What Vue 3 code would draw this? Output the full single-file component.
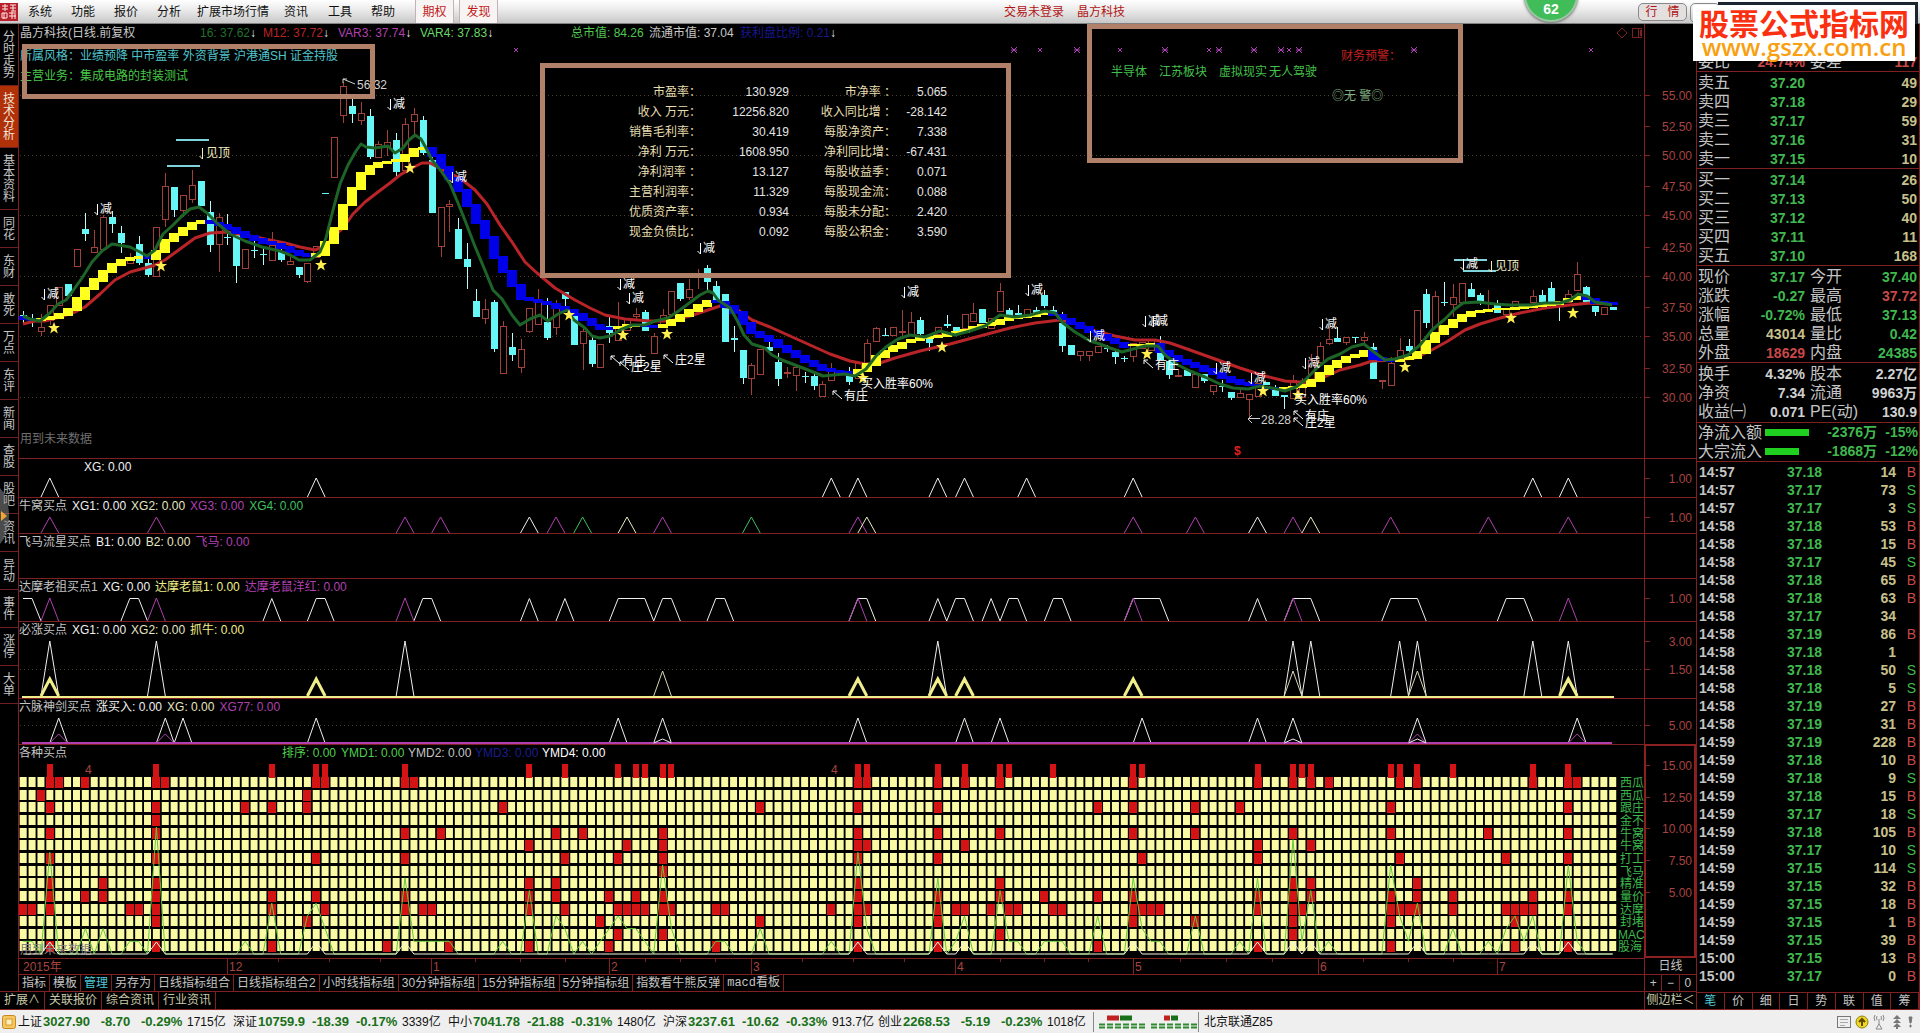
<script setup>
const X0 = 23.2
const STEP = 8.88
const r1 = (n) => Math.round(n * 10) / 10
const cx = (i) => r1(X0 + STEP * i)

const menus = [
  ['系统', 43], ['功能', 43], ['报价', 43], ['分析', 40], ['扩展市场行情', 87],
  ['资讯', 44], ['工具', 43], ['帮助', 44],
]
const sideTabs = ['分时走势', '技术分析', '基本资料', '同花', '东财', '敢死', '万点', '东评', '新闻', '查股', '股吧', '资讯', '异动', '事件', '涨停', '大单']

const candleText = `c945,955,933,968 c955,965,943,980 r982,992,942,1008 r916,960,916,975 r860,915 c853,888,853,898 r747,797
c688,703,640,722 r742,757,690,760 r652,748,645,748 c650,672,633,700 c698,730,678,760 r770,790,760,790 c732,788,708,795 c788,825,765,830
r680,827 r558,658,520,680 c562,630,560,650 r586,630,586,650 r556,596,510,610 c544,618 c636,735,603,755 r650,732,640,815 c710,714,643,735
c705,797,690,848 r747,803 c750,754,720,775 c762,766,745,795 r735,780,695,780 c755,780,735,787 r783,791,770,791 c802,825,802,835 r788,842,788,848
r738,770 c578,581 r412,532 r258,344,245,368 c318,342,297,368 r340,359,306,374 c348,470,327,478 r432,470,422,470 r426,440,390,468 c420,515,400,533
r373,510,355,510 r342,362,325,405 c360,460,348,465 c480,640,470,640 r622,737,622,770 r613,617,600,695 c688,776,655,776 c777,802,730,866 c903,950,868,950
r928,955,898,972 c905,1046,900,1055 r978,1118,963,1122 c1041,1064,1000,1082 r1048,1102,1018,1118 r925,992,925,1000 r900,973,868,973 c965,1013,895,1020
r918,980,900,1005 c876,896,876,920 c938,1034 r993,1030,978,1110 c1020,1092,1010,1100 r1033,1100 c978,998,950,1028 r978,1020,905,1020 r956,990
r943,948,925,960 c936,993,930,993 r1008,1058,1000,1058 r944,980,928,980 r874,942 c848,897,848,902 r868,890,838,900 r822,826,808,868 c804,846,795,870
c858,900,843,910 c882,1026 c1015,1020,978,1055 c1050,1134,1050,1152 r1096,1135,1088,1185 r1048,1122 c1042,1052,1020,1052 c1086,1137,1058,1158
r1116,1120,1100,1135 r1102,1124,1102,1172 c1127,1130,1115,1150 c1127,1158,1120,1170 r1153,1187,1143,1187 r1108,1140,1088,1140 c1110,1118
c1112,1145,1100,1155 r1090,1135 r1030,1100,1017,1100 r985,1022,980,1022 c1005,1009,985,1009 r980,1005 r993,997,930,1010 r966,1005,937,1005
c960,1002,950,1015 c1018,1030,1018,1052 r980,1002 c973,978,945,985 c982,1000 r943,985 r940,962,908,962 c927,970 r955,985 r874,932,850,932
c930,955,925,955 c940,944,915,955 r928,945 c930,940,922,940 c885,918,870,925 c930,945,917,945 c968,1037,935,1055 c1035,1064 r1053,1066,1053,1082
r1053,1066,1053,1082 r1037,1057 c1044,1047,1035,1055 c1056,1072,1050,1092 c1075,1078,1068,1085 r1030,1068,1030,1085 r1025,1045 r1020,1050 c1040,1080,1008,1080
c1082,1124,1082,1137 r1124,1126,1110,1126 c1110,1127 r1123,1160 c1123,1143,1123,1150 r1154,1172,1154,1185 c1157,1160,1140,1175 c1175,1194,1175,1200
r1178,1190,1165,1190 r1182,1198,1182,1258 r1150,1188 c1145,1155 c1160,1188,1155,1188 c1186,1190,1186,1227 r1140,1195,1125,1195 r1150,1190,1135,1190
r1080,1140,1062,1140 r1038,1085,1025,1085 r1018,1028,980,1035 c1014,1026,982,1026 r1010,1025,1010,1035 c1010,1013,1010,1030 r1010,1020,995,1030
c1040,1137,1030,1137 r1139,1143,1139,1168 r1090,1155,1070,1155 r1050,1070,1015,1070 c1037,1052,1018,1065 r930,1065 c882,968,868,985 r888,998,873,998
c906,909,845,918 r892,912,852,950 r850,905 c867,890,850,890 c885,905,880,915 r928,931,870,931 c915,940,900,940 r925,942 r902,920 r915,925
r888,905,870,905 c885,905,870,905 c863,907,847,907 c910,920,910,963 r883,905,870,905 r823,870,785,870 c862,905,858,905 c918,935,918,948 r920,943 c922,930`
const candles = candleText.trim().split(/\s+/).map((s, i) => {
  const v = s.slice(1).split(',').map((n) => Math.round(n / 3))
  const [top, bottom] = v
  return { up: s[0] === 'r', x: Math.round(cx(i)), top, h: Math.max(bottom - top, 1), high: v[2] ?? top, bottom, low: v[3] ?? bottom }
})

const fastLine = '23,316 30,319 40,321 50,313 58,304 66,300 72,292 82,278 92,262 102,251 112,244 118,245 130,247 140,252 147,256 155,250 163,234 172,226 182,216 190,209 199,207 207,213 218,224 230,234 245,241 262,247 280,251 290,255 299,260 310,260 320,252 326,238 333,210 340,184 348,165 356,151 361,144 366,147 375,148 388,146 395,153 403,148 409,140 415,135 421,139 426,148 432,160 441,171 450,184 458,203 466,223 474,244 484,268 493,290 502,299 512,315 520,325 530,319 540,315 548,321 558,314 567,310 574,320 585,328 592,336 600,338 610,336 620,330 632,325 645,325 655,321 668,318 680,310 692,301 700,295 708,291 713,293 718,300 730,308 737,320 744,335 752,344 765,348 772,355 782,360 795,365 808,370 823,376 833,375 845,374 855,376 866,369 876,356 886,347 898,339 910,335 925,337 940,331 955,335 970,331 985,326 1000,315 1015,317 1030,315 1045,311 1055,313 1063,323 1075,332 1090,341 1100,344 1110,348 1122,352 1133,349 1145,346 1158,346 1165,355 1178,365 1190,371 1205,377 1220,384 1233,388 1248,389 1260,386 1272,388 1285,391 1296,387 1305,380 1318,367 1328,359 1340,354 1352,347 1364,344 1374,352 1385,360 1395,359 1408,355 1420,345 1432,330 1445,319 1455,309 1463,303 1478,302 1495,304 1510,305 1530,305 1545,303 1560,303 1570,300 1578,294 1587,296 1595,302 1612,305'
const slowLine = '23,324 35,321 45,321 60,317 75,312 85,307 100,294 115,280 130,272 145,268 155,265 165,260 180,249 195,238 210,233 228,232 245,235 265,239 285,243 300,247 315,250 325,246 335,235 343,228 353,214 365,202 378,192 390,183 400,175 412,168 422,163 430,163 443,170 460,178 475,190 487,204 500,225 512,242 525,262 537,273 555,288 575,300 590,308 605,315 625,319 650,321 670,321 690,316 705,311 720,306 735,308 752,320 770,327 790,336 810,345 830,354 850,361 865,364 880,363 895,358 920,351 950,344 980,336 1010,328 1035,323 1060,320 1075,323 1095,331 1115,336 1135,340 1155,340 1170,343 1190,350 1215,359 1240,368 1265,376 1285,381 1300,382 1320,379 1340,370 1360,365 1372,361 1395,360 1415,358 1430,351 1448,341 1465,330 1480,324 1500,318 1520,313 1545,308 1570,305 1590,303 1612,304'
const midPoints = '18,317 35,320 42,320 50,318 58,316 67,313 72,309 80,299 90,288 100,278 110,268 120,261 132,258 142,256 147,260 152,258 162,250 170,240 180,233 190,226 200,221 207,221 215,223 230,227 245,234 262,240 280,245 295,251 311,256 320,255 329,243 339,227 348,203 357,187 365,173 374,166 383,163 401,160 410,155 418,149 427,148 436,155 445,167 454,178 463,190 472,205 481,222 490,238 498,257 507,271 516,285 525,298 540,301 556,305 568,309 578,314 588,320 600,327 610,329 620,328 636,324 650,326 662,327 668,324 680,318 690,312 700,306 711,301 716,299 722,303 735,308 744,320 755,332 770,338 785,348 800,356 815,364 830,370 845,372 855,373 862,370 872,363 880,356 890,350 905,343 920,339 940,336 960,332 975,328 995,323 1010,318 1030,316 1050,313 1057,315 1070,320 1085,327 1100,334 1115,341 1130,346 1140,345 1155,344 1165,352 1180,359 1200,366 1220,374 1240,382 1265,388 1280,389 1288,388 1300,387 1308,385 1320,377 1330,368 1340,362 1350,357 1360,355 1368,351 1380,360 1395,361 1402,360 1415,357 1422,352 1430,342 1440,333 1450,325 1460,318 1470,313 1480,311 1490,310 1510,309 1535,306 1555,304 1570,300 1582,297 1590,299 1600,302 1620,304'.split(' ').map((p) => p.split(',').map(Number))
function mid(x) {
  for (let i = 1; i < midPoints.length; i++) {
    const [bx, by] = midPoints[i]
    if (x <= bx) {
      const [ax, ay] = midPoints[i - 1]
      return ay + ((by - ay) * (x - ax)) / (bx - ax)
    }
  }
  return midPoints[midPoints.length - 1][1]
}
const blocks = candles.map((c, i) => {
  const a = mid(cx(i) - 4.4)
  const b = mid(cx(i) + 4.4)
  const falling = b > a + 0.3
  const thick = Math.abs(b - a) > 2.5 ? 2 : 1
  return { x: Math.round(cx(i) - 5), y: Math.round(Math.min(a, b)) - 1, h: Math.round(Math.abs(b - a)) + thick + 1, color: falling ? '#0000e8' : '#ffff20' }
})

const mainGrid = [95, 155, 215, 276, 336, 397]
const mainAxis = [['55.00', 95], ['52.50', 126], ['50.00', 155], ['47.50', 186], ['45.00', 215], ['42.50', 247], ['40.00', 276], ['37.50', 307], ['35.00', 336], ['32.50', 368], ['30.00', 397]]
const drops = [[389, 104], [96, 209], [451, 177], [43, 294], [699, 248], [619, 284], [628, 298], [903, 292], [1027, 290], [1089, 336], [1144, 321], [1152, 321], [1215, 368], [1250, 378], [1304, 363], [1321, 324], [1462, 264]]
const tops = [[201, 153], [1490, 266]]
const segments = [[176, 209, 140], [167, 200, 166], [1454, 1487, 260], [1463, 1496, 271]]
const pointers = [['有庄', 611, 356], ['庄2星', 620, 362], ['庄2星', 664, 355], ['有庄', 833, 391], ['有庄', 1144, 360], ['有庄', 1294, 411], ['庄2星', 1294, 418]]
const winRates = [[861, 384], [1295, 400]]
const stars = [[410, 168], [54, 328], [161, 266], [321, 265], [569, 315], [623, 335], [667, 334], [863, 378], [942, 347], [1147, 354], [1263, 391], [1298, 395], [1405, 367], [1511, 318], [1573, 313]]
const starPath = 'M0-6 1.6-2H6L2.4.8 3.8 5.5 0 2.7-3.8 5.5-2.4.8-6-2H-1.6Z'
const crosses = [[516, 0], [1014, 1], [1040, 0], [1077, 1], [1120, 0], [1165, 1], [1209, 0], [1219, 1], [1254, 1], [1281, 1], [1289, 0], [1299, 1], [1414, 1], [1591, 0]]

const facts = [
  ['市盈率：', '130.929', '市净率 ：', '5.065'],
  ['收入 万元：', '12256.820', '收入同比增 ：', '-28.142'],
  ['销售毛利率：', '30.419', '每股净资产：', '7.338'],
  ['净利 万元：', '1608.950', '净利同比增：', '-67.431'],
  ['净利润率 ：', '13.127', '每股收益季：', '0.071'],
  ['主营利润率：', '11.329', '每股现金流：', '0.088'],
  ['优质资产率：', '0.934', '每股未分配：', '2.420'],
  ['现金负债比：', '0.092', '每股公积金：', '3.590'],
]

const W = '#f0f0f0', Y = '#f0ee8a', M = '#b040b0', G = '#3fc060', T = '#c4c4c4'
const peak = (i, j, top, base) => `M${cx(i - 1)} ${base}L${cx(i)} ${top}H${cx(j)}L${cx(j + 1)} ${base}`
const many = (list, top, base) => list.map((v) => (Array.isArray(v) ? peak(v[0], v[1], top, base) : peak(v, v, top, base))).join('')
const panels = [
  {
    y: 458, h: 39, indent: true, legend: [['XG: 0.00', W]], axis: [['1.00', 478]], grid: [],
    shapes: [[W, 1, many([3, 33, 91, 94, 103, 106, 113, 125, 170, 174], 478, 497)]],
  },
  {
    y: 497, h: 36, legend: [['牛窝买点', T], ['XG1: 0.00', W], ['XG2: 0.00', '#e6e6c0'], ['XG3: 0.00', M], ['XG4: 0.00', G]], axis: [['1.00', 517]], grid: [],
    shapes: [
      [M, 1, many([3, 15, 43, 47, 60, 72, 94, 125, 132, 143, 154, 165, 174], 517, 533)],
      [W, 1, many([57, 139], 517, 533)], ['#ececc0', 1, many([68, 95, 145], 517, 533)], [G, 1, many([63, 82], 517, 533)],
    ],
  },
  { y: 533, h: 45, legend: [['飞马流星买点', T], ['B1: 0.00', W], ['B2: 0.00', '#e6e6c0'], ['飞马: 0.00', M]], axis: [], grid: [], shapes: [] },
  {
    y: 578, h: 43, legend: [['达摩老祖买点1', T], ['XG: 0.00', W], ['达摩老鼠1: 0.00', Y], ['达摩老鼠洋红: 0.00', M]], axis: [['1.00', 598]], grid: [],
    shapes: [
      [W, 1, `M23 598.500H32L41 621` + many([[12, 13], 28, [33, 34], [45, 46], 57, 61, [67, 70], [72, 73], [78, 79], [94, 95], 103, [105, 106], 109, [111, 112], [116, 117], [125, 128], 139, [143, 145], [154, 157], [167, 169]], 598.5, 621)],
      [M, 1, many([3, 15, 43, 94, 125, 143, 174], 598, 621)],
    ],
  },
  {
    y: 621, h: 77, legend: [['必涨买点', T], ['XG1: 0.00', W], ['XG2: 0.00', '#e6e6c0'], ['抓牛: 0.00', Y]], axis: [['3.00', 641], ['1.50', 669]], grid: [669],
    shapes: [
      [W, 1, many([3, 15, 43, 103, 143, 145, 155, 157, 170, 174], 641, 696)],
      ['#d8d8b0', 1, many([72, 143, 157], 671, 696)],
      [Y, 2, 'M22 697H1614'],
      [Y, 3, many([3, 33, 94, 103, 106, 125, 174], 679, 696)],
    ],
  },
  {
    y: 698, h: 46, legend: [['六脉神剑买点', T], ['涨买入: 0.00', W], ['XG: 0.00', '#e6e6c0'], ['XG77: 0.00', M]], axis: [['5.00', 725]], grid: [725],
    shapes: [
      [W, 1, many([4, 16, 18, 33, 67, 72, 94, 106, 110, 126, 139, 143, 157, 175], 718, 743)],
      [M, 1, 'M22 743.500H1612M22 742.500H1612' + many([4, 16, 157, 175], 734, 743)],
      [W, 1, many([72, 143, 157], 739, 743)],
    ],
  },
]

const rowNames = ['西瓜', '西瓜', '跟庄', '金不', '牛窝', '牛窝', '打工', '飞马', '精准', '量价', '达摩', '封堵', 'MAC', '股海']
const rowY = (r) => Math.round(777 + 12.65 * r)
const hits = [
  [3, 4, 7, 15, 16, 33, 34, 43, 44, 94, 95, 103, 106, 125, 139, 143, 145, 147, 155, 157, 170, 174, 175, 110],
  [2, 32],
  [3, 15, 25, 28, 32, 54, 83, 94, 103, 121, 125, 132, 137, 154, 174],
  [15],
  [3, 15, 43, 47, 60, 63, 72, 94, 103, 110, 125, 132, 143, 154, 165, 174],
  [57, 68, 72, 94, 95, 106, 139, 145],
  [3, 15, 33, 43, 61, 67, 72, 94, 103, 126, 139, 155, 167, 174],
  [72],
  [3, 9, 15, 57, 60, 94, 110, 143, 145, 157],
  [3, 7, 9, 15, 28, 33, 43, 57, 60, 66, 69, 72, 94, 103, 110, 115, 121, 125, 139, 143, 145, 154, 157, 161, 170, 174],
  [0, 1, 3, 12, 13, 15, 28, 34, 43, 45, 46, 57, 61, 67, 68, 69, 70, 72, 73, 78, 79, 91, 94, 95, 103, 105, 106, 109, 111, 112, 116, 117, 125, 126, 127, 128, 139, 143, 144, 154, 155, 156, 157, 161, 167, 168, 169, 170, 174],
  [15, 32, 65, 83, 94, 103, 125, 132, 143, 154, 168],
  [67, 72, 110, 143],
  [3, 15, 28, 41, 48, 57, 66, 78, 94, 103, 121, 139, 154, 168, 174],
]
const redCells = hits.flatMap((list, r) => list.map((i) => ({ x: Math.round(cx(i) - 4), y: rowY(r) })))
const topBars = [3, 15, 28, 33, 34, 43, 57, 61, 67, 69, 70, 72, 73, 94, 95, 103, 106, 110, 111, 116, 125, 126, 139, 143, 144, 145, 154, 155, 157, 161, 170, 174]
const counts = { 0: 1, 1: 1, 3: 8, 7: 2, 9: 2, 12: 1, 13: 1, 15: 10, 25: 1, 28: 4, 32: 3, 33: 4, 34: 2, 43: 6, 44: 1, 45: 1, 46: 1, 47: 1, 48: 1, 54: 1, 57: 5, 60: 3, 61: 2, 63: 1, 65: 1, 66: 2, 67: 3, 68: 2, 69: 2, 70: 1, 72: 7, 73: 2, 78: 1, 79: 1, 83: 2, 91: 1, 94: 8, 95: 2, 103: 6, 105: 1, 106: 3, 110: 5, 111: 1, 112: 1, 115: 1, 116: 1, 117: 1, 121: 3, 125: 6, 126: 2, 127: 1, 128: 1, 132: 3, 137: 1, 139: 6, 143: 9, 144: 1, 145: 5, 147: 1, 154: 7, 155: 3, 156: 1, 157: 4, 161: 2, 165: 1, 167: 2, 168: 3, 169: 1, 170: 3, 174: 7, 175: 1 }
const countLine = candles.map((c, i) => `${cx(i)},${r1(954 - 12.7 * (counts[i] || 0))}`).join(' ')
const picks = [3, 15, 33, 43, 94, 103, 106, 125, 139, 143, 145, 157, 170, 174]
const pickLine = candles.map((c, i) => `${cx(i)},${picks.includes(i) ? 942 : 954}`).join(' ')
const comboLegend = [['各种买点', T], ['排序: 0.00', '#4fd04f'], ['YMD1: 0.00', '#4fd04f'], ['YMD2: 0.00', T], ['YMD3: 0.00', '#1c1c90'], ['YMD4: 0.00', '#ffffff']]
const comboAxis = [['15.00', 765], ['12.50', 797], ['10.00', 828], ['7.50', 860], ['5.00', 892]]
const months = [['12', 227], ['1', 431], ['2', 609], ['3', 751], ['4', 955], ['5', 1133], ['6', 1318], ['7', 1497]]
const minorTicks = [278, 329, 380, 475, 520, 565, 645, 680, 715, 802, 853, 904, 1000, 1044, 1088, 1180, 1226, 1272, 1363, 1408, 1453]

const templates = ['指标', '模板', '管理', '另存为', '日线指标组合', '日线指标组合2', '小时线指标组', '30分钟指标组', '15分钟指标组', '5分钟指标组', '指数看牛熊反弹', 'macd看板']
const links = ['扩展∧', '关联报价', '综合资讯', '行业资讯']

const book = [
  [['卖五', '37.20', 49], ['卖四', '37.18', 29], ['卖三', '37.17', 59], ['卖二', '37.16', 31], ['卖一', '37.15', 10]],
  [['买一', '37.14', 26], ['买二', '37.13', 50], ['买三', '37.12', 40], ['买四', '37.11', 11], ['买五', '37.10', 168]],
]
const stats = [
  [['现价', '37.17', 'g', '今开', '37.40', 'g'], ['涨跌', '-0.27', 'g', '最高', '37.72', 'r'], ['涨幅', '-0.72%', 'g', '最低', '37.13', 'g'], ['总量', '43014', 'y', '量比', '0.42', 'g'], ['外盘', '18629', 'r', '内盘', '24385', 'g']],
  [['换手', '4.32%', 'w', '股本', '2.27亿', 'w'], ['净资', '7.34', 'w', '流通', '9963万', 'w'], ['收益㈠', '0.071', 'w', 'PE(动)', '130.9', 'w']],
]
const flows = [['净流入额', 44, '-2376万', '-15%'], ['大宗流入', 34, '-1868万', '-12%']]
const ticks = `57 18 14 B,57 17 73 S,57 17 3 S,58 18 53 B,58 18 15 B,58 17 45 S,58 18 65 B,58 18 63 B,58 17 34,58 19 86 B,58 18 1,58 18 50 S,58 18 5 S,58 19 27 B,58 19 31 B,59 19 228 B,59 18 10 B,59 18 9 S,59 18 15 B,59 17 18 S,59 18 105 B,59 17 10 S,59 15 114 S,59 15 32 B,59 15 18 B,59 15 1 B,59 15 39 B,00 15 13 B,00 17 0 B`
  .split(',').map((s) => s.split(' ')).map(([m, p, v, f]) => ({ t: (m === '00' ? '15:' : '14:') + m, p: '37.' + p, v, f: f || '' }))
const quoteTabs = ['笔', '价', '细', '日', '势', '联', '值', '筹']
const indices = [
  ['上证', '3027.90', '-8.70', '-0.29%', '1715亿'], ['深证', '10759.9', '-18.39', '-0.17%', '3339亿'], ['中小', '7041.78', '-21.88', '-0.31%', '1480亿'],
  ['沪深', '3237.61', '-10.62', '-0.33%', '913.7亿'], ['创业', '2268.53', '-5.19', '-0.23%', '1018亿'],
]
</script>

<template>
  <div class="app">
    <header class="menubar">
      <svg class="logo" width="18" height="18" viewBox="0 0 18 18">
        <rect width="18" height="18" fill="#b8202c" />
        <path d="M2 3h6M5 1v7M2 6h6M10 2h6M10 5h6M13 2v6M11 8h5M2 10h5v5H2zM4 10v6M9 10h7M9 13h7M12 9v7M15 11v5" stroke="#ffe8e4" fill="none" />
      </svg>
      <nav class="menu">
        <button v-for="m in menus" :key="m[0]" type="button" :style="{ width: m[1] + 'px' }">{{ m[0] }}</button>
      </nav>
      <button class="hot" type="button">期权</button>
      <button class="hot" type="button">发现</button>
      <span class="login">交易未登录</span>
      <span class="stock">晶方科技</span>
      <div class="ball">62</div>
      <button class="mode" type="button">行&nbsp;&nbsp;&nbsp;情</button>
      <span class="mode-next"></span>
      <span class="mode-dark"></span>
      <div class="watermark">
        <strong>股票公式指标网</strong>
        <a href="#">www.gszx.com.cn</a>
      </div>
    </header>

    <div class="body">
      <div class="left">
        <div class="upper">
          <aside class="side">
            <button v-for="(s, i) in sideTabs" :key="s" type="button" :class="{ on: i === 1 }"><span>{{ s }}</span></button>
            <svg class="handle" width="10" height="56" viewBox="0 0 10 56"><path d="M0 0Q9 10 9 28T0 56Z" fill="#888" opacity=".55" /><path d="M1 23l6 5-6 5z" fill="#f0a830" /></svg>
          </aside>

          <main class="charts">
            <section class="panel main-panel">
              <svg class="plot" viewBox="19 24 1625 434" height="434" preserveAspectRatio="xMinYMin meet">
                <line v-for="y in mainGrid" :key="y" x1="20" x2="1644" :y1="y + 0.5" :y2="y + 0.5" class="dots" />
                <g v-for="(c, i) in candles" :key="i">
                  <template v-if="c.up">
                    <path :d="`M${c.x + .5} ${c.high}V${c.top}M${c.x + .5} ${c.bottom}V${c.low}`" stroke="#a04038" />
                    <rect :x="c.x - 2.5" :y="c.top + .5" width="6" :height="c.h" fill="#000" stroke="#a04038" />
                  </template>
                  <template v-else>
                    <path :d="`M${c.x + .5} ${c.high}V${c.low}`" stroke="#b8fbfb" />
                    <rect :x="c.x - 3" :y="c.top" width="7" :height="c.h" fill="#66f6f6" />
                  </template>
                </g>
                <polyline :points="slowLine" class="curve" stroke="#b82428" />
                <rect v-for="(b, i) in blocks" :key="'b' + i" :x="b.x" :y="b.y" width="10" :height="b.h" :fill="b.color" />
                <polyline :points="fastLine" class="curve" stroke="#1d6428" />
                <line v-for="(s, i) in segments" :key="'s' + i" :x1="s[0]" :x2="s[1]" :y1="s[2]" :y2="s[2]" stroke="#7fd4dc" stroke-width="2" />
                <path v-for="(s, i) in stars" :key="'t' + i" :transform="`translate(${s[0]} ${s[1]})`" :d="starPath" fill="#fff050" />
                <path v-for="(c, i) in crosses" :key="'c' + i" :transform="`translate(${c[0]} 50)`" :d="c[1] ? 'M-3-3 3 3M3-3-3 3M-3 0H3' : 'M-2-2 2 2M2-2-2 2'" stroke="#b040b8" />
                <g v-for="(d, i) in drops" :key="'d' + i" :transform="`translate(${d[0]} ${d[1]})`">
                  <path d="M1.500-5V6M1.500 6-1.500 3" stroke="#fff" fill="none" /><text x="4" y="4" fill="#fff">减</text>
                </g>
                <g v-for="(d, i) in tops" :key="'p' + i" :transform="`translate(${d[0]} ${d[1]})`">
                  <path d="M1.500-5V6M1.500 6-1.500 3" stroke="#f0ecc0" fill="none" /><text x="5" y="4" fill="#f0ecc0">见顶</text>
                </g>
                <g v-for="(p, i) in pointers" :key="'q' + i" :transform="`translate(${p[1]} ${p[2]})`">
                  <path d="M0 4V0H4M0 0 9 8" stroke="#fff" fill="none" /><text x="11" y="9" fill="#fff">{{ p[0] }}</text>
                </g>
                <text v-for="(w, i) in winRates" :key="'w' + i" :x="w[0]" :y="w[1] + 4" fill="#fff">买入胜率60%</text>
                <path d="M347 79h-4v4M343 79l12 5M1252 415l-4 4 4 4M1248 418.500h12" stroke="#d0d0d0" fill="none" />
                <text x="357" y="89" fill="#d0d0d0">56.32</text>
                <text x="1261" y="424" fill="#d0d0d0">28.28</text>
                <text x="1234" y="455" fill="#e02020" font-weight="bold">$</text>
                <text x="20" y="443" fill="#707070">用到未来数据</text>
                <path d="M1622 28l5 5-5 5-5-5zM1632.500 28.500h9v9h-9zM1638.500 28v10M1640.500 30v6" stroke="#7c2020" fill="none" />
              </svg>
              <svg class="axis" viewBox="1644 24 52 434" width="52" height="434">
                <path d="M1644.500 24V458" stroke="#802020" />
                <g v-for="a in mainAxis" :key="a[0]"><path :d="`M1645 ${a[1] + .5}h5`" stroke="#802020" /><text x="1692" :y="a[1] + 5" text-anchor="end" class="num">{{ a[0] }}</text></g>
              </svg>
              <div class="overlay">
                <div class="main-legend">
                  <span style="color: #c8c8c8">晶方科技(日线.前复权</span>
                  <span class="fall" style="color: #20702c">16: 37.62</span>
                  <span class="fall" style="color: #bc2424">M12: 37.72</span>
                  <span class="fall" style="color: #b040b0">VAR3: 37.74</span>
                  <span class="fall" style="color: #68d868">VAR4: 37.83</span>
                  <span style="color: #50c850">总市值: 84.26</span>
                  <span style="color: #c8c8c8">流通市值: 37.04</span>
                  <span class="fall" style="color: #18188c">获利盘比例: 0.21</span>
                </div>
                <div class="notes">
                  <p class="style-note"><span>所属风格：</span>业绩预降 中市盈率 外资背景 沪港通SH 证金持股</p>
                  <p class="biz-note"><span>主营业务：</span>集成电路的封装测试</p>
                </div>
                <div class="frame frame-a"></div>
                <div class="frame frame-b">
                  <table class="facts">
                    <tbody>
                      <tr v-for="f in facts" :key="f[0]"><th scope="row">{{ f[0] }}</th><td>{{ f[1] }}</td><th scope="row">{{ f[2] }}</th><td>{{ f[3] }}</td></tr>
                    </tbody>
                  </table>
                </div>
                <div class="frame frame-c">
                  <p class="warn">财务预警：</p>
                  <p class="blocks"><span>半导体</span><span>江苏板块</span><span>虚拟现实</span><span>无人驾驶</span></p>
                  <p class="safe">◎无 警◎</p>
                </div>
              </div>
            </section>

            <section v-for="p in panels" :key="p.y" class="panel">
              <svg class="plot" :viewBox="`19 ${p.y} 1625 ${p.h}`" :height="p.h" preserveAspectRatio="xMinYMin meet">
                <path :d="`M19 ${p.y + .5}H1644`" stroke="#802020" />
                <line v-for="y in p.grid" :key="y" x1="20" x2="1644" :y1="y + 0.5" :y2="y + 0.5" class="dots" />
                <path v-for="(s, i) in p.shapes" :key="i" :d="s[2]" :stroke="s[0]" :stroke-width="s[1]" fill="none" />
              </svg>
              <svg class="axis" :viewBox="`1644 ${p.y} 52 ${p.h}`" width="52" :height="p.h">
                <path :d="`M1644.500 ${p.y}v${p.h}M1644 ${p.y + .5}h52`" stroke="#802020" />
                <g v-for="a in p.axis" :key="a[0]"><path :d="`M1645 ${a[1] + .5}h5`" stroke="#802020" /><text x="1692" :y="a[1] + 5" text-anchor="end" class="num">{{ a[0] }}</text></g>
              </svg>
              <div class="legend" :class="{ indent: p.indent }"><span v-for="l in p.legend" :key="l[0]" :style="{ color: l[1] }">{{ l[0] }}</span></div>
            </section>

            <section class="panel">
              <svg class="plot" viewBox="19 744 1625 214" height="214" preserveAspectRatio="xMinYMin meet">
                <path d="M19 744.500H1644" stroke="#802020" />
                <line v-for="(n, r) in rowNames" :key="r" x1="19.700" x2="1616.400" :y1="rowY(r) + 5" :y2="rowY(r) + 5" stroke="#fafaa4" stroke-width="10" stroke-dasharray="7 1.880" />
                <rect v-for="(c, i) in redCells" :key="i" :x="c.x" :y="c.y" width="8" height="11" fill="#d41414" />
                <rect v-for="b in topBars" :key="'b' + b" :x="Math.round(cx(b) - 3)" y="764" width="6" height="14" fill="#d41414" />
                <text x="20" y="954" fill="#808080">用到未来数据</text>
                <text x="85" y="774" class="num">4</text><text x="831" y="774" class="num">4</text>
                <polyline :points="countLine" fill="none" stroke="#62c83c" />
                <polyline :points="pickLine" fill="none" stroke="#f4f4e0" />
                <text v-for="(n, r) in rowNames" :key="'n' + r" :x="r < 12 ? 1620 : 1618" :y="rowY(r) + 10" fill="#3cb84c">{{ n }}</text>
              </svg>
              <svg class="axis" viewBox="1644 744 52 214" width="52" height="214">
                <rect x="1645" y="745" width="50" height="212" fill="none" stroke="#8c2020" stroke-width="2" />
                <g v-for="a in comboAxis" :key="a[0]"><path :d="`M1645 ${a[1] + .5}h5`" stroke="#802020" /><text x="1692" :y="a[1] + 5" text-anchor="end" class="num">{{ a[0] }}</text></g>
              </svg>
              <div class="legend combo"><span v-for="l in comboLegend" :key="l[0]" :style="{ color: l[1] }">{{ l[0] }}</span></div>
            </section>

            <div class="dates">
              <svg class="plot" viewBox="19 958 1625 16" height="16" preserveAspectRatio="xMinYMin meet">
                <path d="M19 958.500H1644" stroke="#802020" />
                <path v-for="t in minorTicks" :key="t" :d="`M${t}.500 959v3`" stroke="#802020" />
                <text x="23" y="971" class="num">2015年</text>
                <g v-for="m in months" :key="m[0]"><path :d="`M${m[1]}.500 958v16`" stroke="#802020" /><text :x="m[1] + 2" y="971" class="num">{{ m[0] }}</text></g>
              </svg>
              <button class="period" type="button">日线</button>
            </div>
            <div class="templates">
              <button v-for="(t, i) in templates" :key="t" type="button" :class="{ on: i === 2, mono: i === 11 }">{{ t }}</button>
              <div class="zoomers"><button type="button">+</button><button type="button">−</button><button type="button">0</button></div>
            </div>
          </main>
        </div>
        <div class="links">
          <a v-for="l in links" :key="l" href="#">{{ l }}</a>
          <button class="collapse" type="button">侧边栏＜</button>
        </div>
      </div>

      <aside class="quote">
        <table class="grid ratio"><tbody><tr><th scope="row">委比</th><td class="r">24.74%</td><th scope="row">委差</th><td class="r">117</td></tr></tbody></table>
        <table v-for="(b, i) in book" :key="i" class="grid">
          <tbody><tr v-for="r in b" :key="r[0]"><th scope="row">{{ r[0] }}</th><td class="g">{{ r[1] }}</td><td class="y" colspan="2">{{ r[2] }}</td></tr></tbody>
        </table>
        <table v-for="(b, i) in stats" :key="'s' + i" class="grid" :class="{ loose: i === 1 }">
          <tbody><tr v-for="r in b" :key="r[0]"><th scope="row">{{ r[0] }}</th><td :class="r[2]">{{ r[1] }}</td><th scope="row">{{ r[3] }}</th><td :class="r[5]">{{ r[4] }}</td></tr></tbody>
        </table>
        <div class="flows">
          <div v-for="f in flows" :key="f[0]" class="flow"><span>{{ f[0] }}</span><i :style="{ width: f[1] + 'px' }"></i><b>{{ f[2] }}</b><b>{{ f[3] }}</b></div>
        </div>
        <table class="ticks">
          <tbody><tr v-for="(t, i) in ticks" :key="i"><td>{{ t.t }}</td><td class="g">{{ t.p }}</td><td class="y">{{ t.v }}</td><td :class="t.f === 'B' ? 'r' : 'g'">{{ t.f }}</td></tr></tbody>
        </table>
        <nav class="quote-tabs"><button v-for="(q, i) in quoteTabs" :key="q" type="button" :class="{ on: i === 0 }">{{ q }}</button></nav>
      </aside>
    </div>

    <footer class="status">
      <svg width="14" height="14" viewBox="0 0 14 14"><rect x=".5" y=".5" width="13" height="13" rx="2" fill="#f4c860" stroke="#c88820" /><rect x="4" y="4" width="6" height="6" fill="#fff0c0" stroke="#d89a30" /></svg>
      <div v-for="x in indices" :key="x[0]" class="index"><span>{{ x[0] }}</span><b>{{ x[1] }}</b><b class="mid">{{ x[2] }}</b><b>{{ x[3] }}</b><span>{{ x[4] }}</span></div>
      <svg class="breadth" width="104" height="20" viewBox="0 0 104 20">
        <path d="M13 6h12M70 6h6" stroke="#c02020" stroke-width="5" /><path d="M26 6h12M77 6h7" stroke="#187018" stroke-width="5" />
        <path d="M5 12.500h47M57 12.500h47M5 15.500h47M57 15.500h47" stroke="#2e8a2e" stroke-width="2" stroke-dasharray="6 2" />
      </svg>
      <span class="host">北京联通Z85</span>
      <svg class="tray" width="84" height="18" viewBox="0 0 84 18" fill="none">
        <rect x="1.500" y="3.500" width="13" height="11" stroke="#777" /><path d="M4 6.500h8M4 9.500h8M4 12.500h5" stroke="#aaa" />
        <circle cx="26" cy="9" r="6" fill="#f0d820" stroke="#908010" /><path d="M26 13V6M23 9l3-3 3 3" stroke="#604800" stroke-width="2" />
        <path d="M43 6v5l-3 5h6l-3-5M39 2q-2 3 0 6M47 2q2 3 0 6M41 3q-1 2 0 4M45 3q1 2 0 4" stroke="#888" />
        <path d="M61 2l4 4h-8zM61 6l4 4h-8zM61 10l4 4h-8zM60 14h2v2h-2z" fill="#777" />
        <path d="M73 4h3l-1 6h-1zM74 12h1v2h-1z" fill="#777" stroke="#777" />
      </svg>
    </footer>
  </div>
</template>

<style>
body { margin: 0; background: #000; }
</style>

<style scoped>
.app { font: 12px/16px "Liberation Sans", "Noto Sans CJK SC", sans-serif; color: #c4c4c4; background: #000; overflow: hidden; }
button { font: inherit; color: inherit; background: none; border: 0; padding: 0; margin: 0; white-space: nowrap; }
a { color: inherit; text-decoration: none; }
p { margin: 0; }
svg { display: block; }
svg text { font-size: 12px; }
table { border-collapse: collapse; table-layout: fixed; }
th, td { padding: 0; font-weight: inherit; }

.menubar { position: relative; display: flex; align-items: center; height: 24px; box-sizing: border-box; border-bottom: 1px solid #808080; background: linear-gradient(#fff, #ececec 40%, #c8c8c8); color: #111; }
.logo { margin: 0 10px 0 0; }
.menu { display: flex; }
.menu button { text-align: left; }
.hot { width: 39px; height: 23px; margin-right: 5px; border: solid #c0b4b4; border-width: 0 1px; background: #f8f4f4; color: #c01818; box-sizing: border-box; }
.login { margin-left: 501px; color: #b01414; }
.stock { margin-left: 13px; color: #b01414; }
.ball { position: absolute; right: 342px; top: -32px; width: 54px; height: 54px; box-sizing: border-box; border: 2px solid #9cc8a4; border-radius: 50%; background: #40bc58; color: #fff; font: bold 14px/78px "Liberation Sans", sans-serif; text-align: center; box-shadow: 0 1px 3px #666; z-index: 2; overflow: hidden; }
.mode { position: absolute; right: 233px; top: 3px; width: 49px; height: 18px; border: 1px solid #888; border-radius: 5px; background: #e4e0e0; color: #b01414; }
.mode-next { position: absolute; right: 200px; top: 3px; width: 28px; height: 18px; border: 1px solid #888; border-radius: 5px; }
.mode-dark { position: absolute; right: 2px; top: 2px; width: 200px; height: 22px; background: #1c2430; }
.watermark { position: absolute; right: 5px; top: 5px; z-index: 3; width: 222px; height: 56px; background: #fff; display: flex; flex-direction: column; align-items: center; white-space: nowrap; }
.watermark strong { font: bold 30px/34px "Noto Sans CJK SC", sans-serif; color: #fa3010; }
.watermark a { font: 600 24px/16px "Open Sans", sans-serif; color: #f8a010; }

.body { display: flex; }
.left { flex: 1; min-width: 0; }
.upper { display: flex; }
.side { position: relative; width: 18px; flex: none; border-right: 1px solid #802020; display: flex; flex-direction: column; }
.side button { height: 38px; box-sizing: border-box; border-bottom: 1px solid #702020; display: flex; align-items: center; justify-content: center; }
.side button:nth-child(-n+3) { height: 62px; }
.side span { width: 12px; line-height: 12px; white-space: normal; word-break: break-all; }
.side .on { background: #b03008; color: #f0e4d8; }
.handle { position: absolute; left: 0; top: 464px; }
.charts { flex: 1; min-width: 0; }
.panel { position: relative; display: flex; }
.plot { flex: 1; min-width: 0; width: 100%; }
.axis { flex: none; }
.num { fill: #a84440; }
.dots { stroke: #4c3c2c; stroke-dasharray: 1 3; }
.curve { fill: none; stroke-width: 3; stroke-linejoin: round; }
.overlay { position: absolute; inset: 0; white-space: nowrap; }
.main-legend { display: grid; grid-template-columns: 180px 63px 75px 82px 151px 78px 91px 110px; margin-left: 1px; line-height: 18px; }
.fall::after { content: "↓"; color: #e0f0f0; }
.notes { padding-left: 1px; margin-top: 4px; line-height: 20px; }
.notes span { display: inline-block; width: 60px; }
.style-note { color: #50c4cc; }
.biz-note { color: #48c848; }
.frame { position: absolute; box-sizing: border-box; border: 5px solid #b08068; }
.frame-a { left: 3px; top: 20px; width: 353px; height: 55px; }
.frame-b { left: 521px; top: 39px; width: 471px; height: 215px; }
.frame-c { left: 1068px; top: 0; width: 376px; height: 139px; padding: 19px 0 0 19px; }
.facts { width: 402px; margin-top: 14px; line-height: 20px; text-align: right; }
.facts th { color: #e6deb0; }
.facts td { width: 88px; color: #e4e4e4; }
.facts th:first-child { width: 156px; }
.facts td:last-child { width: 51px; }
.warn { color: #c02020; margin-left: 230px; line-height: 16px; }
.blocks { display: grid; grid-template-columns: 48px 60px 50px auto; color: #44c04c; line-height: 16px; }
.safe { margin: 8px 0 0 221px; color: #80b080; }
.legend { position: absolute; left: 0; top: 1px; display: flex; gap: 5px; white-space: nowrap; }
.indent { left: 65px; }
.combo { display: grid; gap: 0; grid-template-columns: 263px 59px 67px 67px 67px auto; }
.dates { display: flex; }
.period { width: 52px; height: 16px; flex: none; box-sizing: border-box; border-left: 1px solid #802020; line-height: 16px; }
.templates { display: flex; height: 17px; border-top: 1px solid #802020; box-sizing: border-box; }
.templates > button { border-right: 1px solid #802020; padding: 0 3px; }
.templates .on { color: #50c8d8; }
.templates .mono { font-family: "Liberation Mono", "Noto Sans CJK SC", monospace; }
.zoomers { margin-left: auto; display: flex; width: 52px; }
.zoomers button { flex: 1; border-left: 1px solid #802020; }
.links { display: flex; height: 19px; box-sizing: border-box; border: solid #802020; border-width: 1px 0; line-height: 17px; }
.links a { padding: 0 4px; border-right: 1px solid #802020; color: #c8c8a8; }
.collapse { margin-left: auto; width: 52px; border-left: 1px solid #802020; color: #c8c8a8; overflow: hidden; }

.quote { width: 224px; flex: none; box-sizing: border-box; border: solid #802020; border-width: 0 1px; font-size: 16px; line-height: 19px; }
.quote table { width: 100%; }
.grid { border-bottom: 1px solid #802020; border-collapse: separate; border-spacing: 0; padding: 1px 2px 0 1px; }
.grid tr { height: 19px; }
.grid th { text-align: left; white-space: nowrap; width: 50px; }
.grid td { text-align: right; font-weight: bold; font-size: 14px; white-space: nowrap; line-height: 18px; }
.grid th:nth-child(3) { padding-left: 5px; width: 42px; }
.grid td:nth-child(2) { width: 57px; }
.ratio { padding-top: 28px; }
.loose { padding-bottom: 1px; }
.g { color: #40b850; }
.r { color: #c84848; }
.y { color: #c8c08c; }
.w { color: #d0d0d0; }
.flows { border-bottom: 1px solid #802020; }
.flow { display: flex; align-items: center; height: 19px; padding: 0 1px; }
.flow span { width: 67px; }
.flow i { height: 7px; background: #20d020; }
.flow b { color: #40b850; font-size: 14px; }
.flow b:nth-of-type(1) { margin-left: auto; }
.flow b:nth-of-type(2) { width: 41px; text-align: right; }
.ticks { margin: 1px 0 7px; font-weight: bold; font-size: 14px; line-height: 18px; }
.ticks td { height: 18px; text-align: right; }
.ticks td:nth-child(1) { text-align: left; padding-left: 2px; width: 60px; }
.ticks td:nth-child(2) { width: 63px; }
.ticks td:nth-child(3) { width: 74px; }
.ticks td:nth-child(4) { padding-right: 3px; font-weight: normal; }
.quote-tabs { display: flex; border: solid #802020; border-width: 1px 0; font-size: 12px; line-height: 16px; }
.quote-tabs button { flex: 1; border-right: 1px solid #802020; }
.quote-tabs .on { color: #50c8d8; }

.status { display: flex; align-items: center; height: 23px; padding-left: 2px; background: #efefef; color: #111; white-space: nowrap; position: relative; }
.status > svg { flex: none; }
.index { display: grid; grid-template-columns: 25px 53px 45px 46px 46px; width: 215px; flex: none; }
.status > .index:nth-child(2) { margin-left: 2px; }
.index b { color: #187018; font-size: 13px; }
.index .mid { text-align: center; padding-right: 6px; }
.breadth { border: solid #888; border-width: 0 1px; }
.host { margin-left: 5px; }
.tray { margin-left: auto; }
</style>
